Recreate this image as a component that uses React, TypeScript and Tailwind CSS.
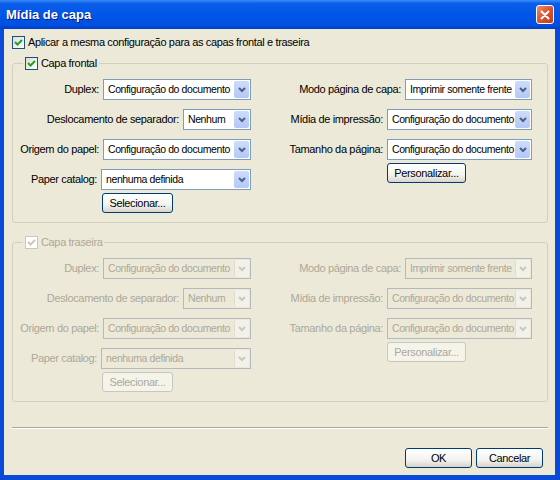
import React from "react"

function Check({ disabled = false }: { disabled?: boolean }) {
  return (
    <span
      className={`flex h-[13px] w-[13px] shrink-0 items-center justify-center border ${
        disabled ? "border-[#cac8bb] bg-white" : "border-[#1c5180] bg-[linear-gradient(135deg,#dcdcd7,#ffffff)]"
      }`}
    >
      <svg width="9" height="9" viewBox="0 0 9 9">
        <path d="M1 4 L3.5 6.5 L8 2" fill="none" stroke={disabled ? "#cac8bb" : "#21a121"} strokeWidth="2" />
      </svg>
    </span>
  )
}

function Combo({ value, w, disabled = false }: { value: string; w: string; disabled?: boolean }) {
  return (
    <div
      className={`flex h-[21px] items-center border ${w} ${
        disabled ? "border-[#b5b8bd] bg-[#ece9d8] text-[#aca899]" : "border-[#7f9db9] bg-white text-black"
      }`}
    >
      <span className="min-w-0 flex-1 overflow-hidden whitespace-nowrap pl-[4px] text-[10.5px] tracking-[-0.4px]">{value}</span>
      <span
        className={`mr-[1px] flex h-[17px] w-[15px] shrink-0 items-center justify-center rounded-[2px] ${
          disabled ? "border-l border-[#e0ddd0] bg-[#f3f2ea]" : "bg-[linear-gradient(to_bottom,#cddcfc,#b4c8f6)]"
        }`}
      >
        <svg width="8" height="6" viewBox="0 0 8 6">
          <path d="M1 1 L4 4 L7 1" fill="none" stroke={disabled ? "#cac8bb" : "#4d6185"} strokeWidth="2" />
        </svg>
      </span>
    </div>
  )
}

function Btn({ label, w, disabled = false }: { label: string; w: string; disabled?: boolean }) {
  return (
    <div
      className={`flex h-[20px] items-center justify-center rounded-[3px] border ${w} ${
        disabled
          ? "border-[#c9c7ba] bg-[#f5f4ea] text-[#aca899]"
          : "border-[#003c74] bg-[linear-gradient(to_bottom,#ffffff,#f3f3ef_60%,#d9d4ca)] text-black"
      }`}
    >
      {label}
    </div>
  )
}

function Row({ label, disabled, children }: { label: string; disabled?: boolean; children: React.ReactNode }) {
  return (
    <div className="flex items-center justify-end gap-[4px]">
      <span className={disabled ? "text-[#aca899]" : "text-black"}>{label}</span>
      {children}
    </div>
  )
}

function CoverGroup({ title, disabled = false }: { title: string; disabled?: boolean }) {
  return (
    <fieldset className="w-[536px] rounded-[3px] border border-[#d0d0bf] pb-[9px]">
      <legend className="ml-[10px] flex h-[13px] items-center gap-[3px] px-[2px]">
        <Check disabled={disabled} />
        <span className={disabled ? "text-[#aca899]" : "text-black"}>{title}</span>
      </legend>
      <div className="flex pt-[9px]">
        <div className="flex w-[238px] flex-col gap-[9px]">
          <Row label="Duplex:" disabled={disabled}>
            <Combo value="Configuração do documento" w="w-[148px]" disabled={disabled} />
          </Row>
          <Row label="Deslocamento de separador:" disabled={disabled}>
            <Combo value="Nenhum" w="w-[68px]" disabled={disabled} />
          </Row>
          <Row label="Origem do papel:" disabled={disabled}>
            <Combo value="Configuração do documento" w="w-[148px]" disabled={disabled} />
          </Row>
          <div className="flex flex-col gap-[3px]">
            <Row label="Paper catalog:" disabled={disabled}>
              <Combo value="nenhuma definida" w="w-[150px]" disabled={disabled} />
            </Row>
            <div className="pl-[89px]">
              <Btn label="Selecionar..." w="w-[71px]" disabled={disabled} />
            </div>
          </div>
        </div>
        <div className="flex flex-1 flex-col items-end gap-[9px] pr-[15px]">
          <Row label="Modo página de capa:" disabled={disabled}>
            <Combo value="Imprimir somente frente" w="w-[127px]" disabled={disabled} />
          </Row>
          <Row label="Mídia de impressão:" disabled={disabled}>
            <Combo value="Configuração do documento" w="w-[145px]" disabled={disabled} />
          </Row>
          <div className="flex flex-col items-end gap-[3px]">
            <Row label="Tamanho da página:" disabled={disabled}>
              <Combo value="Configuração do documento" w="w-[145px]" disabled={disabled} />
            </Row>
            <div className="w-[145px]">
              <Btn label="Personalizar..." w="w-[79px]" disabled={disabled} />
            </div>
          </div>
        </div>
      </div>
    </fieldset>
  )
}

export default function App() {
  return (
    <div className="flex h-[480px] w-[560px] flex-col bg-[#0a4ad8] font-['Liberation_Sans',Arial,sans-serif] text-[11px] tracking-[-0.35px]">
      <div className="flex h-[29px] shrink-0 items-center justify-between bg-[linear-gradient(to_bottom,#3b8cf8_0%,#0a5ee8_12%,#0056e8_50%,#0050e0_85%,#003dc8_100%)] pl-[6px] pr-[6px]">
        <span className="text-[13px] font-bold tracking-normal text-white [text-shadow:1px_1px_#0a1a8a]">Mídia de capa</span>
        <div className="flex h-[19px] w-[18px] items-center justify-center rounded-[3px] border border-white bg-[linear-gradient(135deg,#ef8d6e,#d9542f_50%,#c23b1e)]">
          <svg width="10" height="10" viewBox="0 0 10 10">
            <path d="M1.5 1.5 L8.5 8.5 M8.5 1.5 L1.5 8.5" stroke="white" strokeWidth="2" strokeLinecap="round" />
          </svg>
        </div>
      </div>
      <div className="mb-[5px] ml-[4px] mr-[5px] flex flex-1 flex-col bg-[#ece9d8] pl-[8px] pr-[12px] pt-[7px]">
        <div className="flex h-[13px] items-center gap-[3px]">
          <Check />
          <span>Aplicar a mesma configuração para as capas frontal e traseira</span>
        </div>
        <div className="mt-[8px]">
          <CoverGroup title="Capa frontal" />
        </div>
        <div className="mt-[13px]">
          <CoverGroup title="Capa traseira" disabled />
        </div>
        <div className="mt-[25px] h-[2px] w-[536px] border-b border-t border-b-white border-t-[#aca899]" />
        <div className="mt-[19px] flex justify-end gap-[4px]">
          <Btn label="OK" w="w-[67px]" />
          <Btn label="Cancelar" w="w-[67px]" />
        </div>
      </div>
    </div>
  )
}
